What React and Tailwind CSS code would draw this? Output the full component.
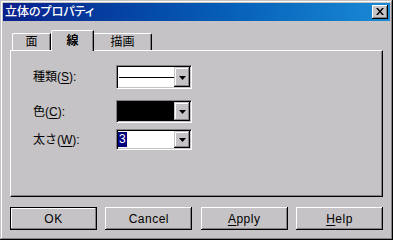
const raised =
  "shadow-[inset_-1px_-1px_#000,inset_1px_1px_#fff,inset_-2px_-2px_#848284]";

const DropButton = () => (
  <div
    className={`w-[16px] h-full flex items-center justify-center bg-[#c6c3c6] shadow-[inset_-1px_-1px_#000,inset_1px_1px_#c6c3c6,inset_-2px_-2px_#848284,inset_2px_2px_#fff]`}
  >
    <svg width="7" height="4" viewBox="0 0 7 4" className="mt-[1px]">
      <path d="M0 0h7L3.5 4z" fill="#000" />
    </svg>
  </div>
);

const Combo = ({ height, children }) => (
  <div
    className={`${height} w-[76px] flex border border-t-[#848284] border-l-[#848284] border-r-white border-b-white p-px bg-white shadow-[inset_1px_1px_#000,inset_-1px_-1px_#c6c3c6]`}
  >
    <div className="flex-1 flex items-center bg-white">{children}</div>
    <DropButton />
  </div>
);

const Label = ({ text, mn }) => (
  <span className="w-[83px] text-[12px] text-black">
    {text}(<span className="underline underline-offset-2">{mn}</span>):
  </span>
);

const Button = ({ children, primary }) => (
  <button
    className={`w-[87px] h-[23px] flex items-center justify-center text-[12px] tracking-[0.5px] text-black bg-[#c6c3c6] ${
      primary ? "border border-black shadow-[inset_-1px_-1px_#848284,inset_1px_1px_#fff]" : raised
    }`}
  >
    {children}
  </button>
);

export default function App() {
  return (
    <div
      className="w-[393px] h-[240px] bg-[#c6c3c6] p-[3px] flex flex-col shadow-[inset_-1px_-1px_#000,inset_1px_1px_#c6c3c6,inset_-2px_-2px_#848284,inset_2px_2px_#fff]"
      style={{ fontFamily: '"Liberation Sans", "Noto Sans CJK JP", sans-serif' }}
    >
      <div className="h-[18px] flex items-center justify-between pl-[2px] pr-[2px] bg-gradient-to-r from-[#0a1f8c] to-[#1a8ad6]">
        <span className="text-white text-[12px] font-medium leading-none [font-feature-settings:'palt']">
          立体のプロパティ
        </span>
        <div className="w-[16px] h-[14px] flex items-center justify-center bg-[#c6c3c6] shadow-[inset_-1px_-1px_#000,inset_1px_1px_#fff,inset_-2px_-2px_#848284]">
          <svg width="8" height="7" viewBox="0 0 8 7" className="mb-px">
            <path d="M0 0h2l2 2.5L6 0h2L5 3.5 8 7H6L4 4.5 2 7H0l3-3.5z" fill="#000" />
          </svg>
        </div>
      </div>

      <div className="px-[7px] mt-[9px] flex flex-col">
        <div className="h-[20px] flex items-end pl-[2px]">
          <div className="w-[39px] h-[17px] flex items-center justify-center text-[12px] border-t border-l border-white border-r border-r-black rounded-tl-[2px] shadow-[inset_-1px_0_#848284]">
            面
          </div>
          <div className="relative z-10 w-[43px] h-[21px] -mb-px bg-[#c6c3c6] flex items-center justify-center text-[12px] font-bold border-t border-l border-white border-r border-r-black rounded-tl-[2px] shadow-[inset_-1px_0_#848284]">
            線
          </div>
          <div className="w-[58px] h-[17px] flex items-center justify-center text-[12px] border-t border-white border-r border-r-black rounded-tr-[2px] shadow-[inset_-1px_0_#848284]">
            描画
          </div>
        </div>

        <div className="h-[147px] border border-t-white border-l-white border-r-black border-b-black shadow-[inset_-1px_-1px_#848284] pt-[14px] pl-[22px] flex flex-col">
          <div className="flex items-center">
            <Label text="種類" mn="S" />
            <Combo height="h-[24px]">
              <div className="w-[55px] h-px bg-black ml-px" />
            </Combo>
          </div>
          <div className="flex items-center mt-[11px]">
            <Label text="色" mn="C" />
            <Combo height="h-[23px]">
              <div className="w-[56px] h-full bg-black" />
            </Combo>
          </div>
          <div className="flex items-center mt-[6px]">
            <Label text="太さ" mn="W" />
            <Combo height="h-[21px]">
              <span className="bg-[#000080] text-white text-[12px] leading-[15px] px-px">3</span>
            </Combo>
          </div>
        </div>
      </div>

      <div className="px-[7px] mt-[10px] flex justify-between">
        <Button primary>OK</Button>
        <Button>Cancel</Button>
        <Button>
          <span className="underline underline-offset-2">A</span>pply
        </Button>
        <Button>
          <span className="underline underline-offset-2">H</span>elp
        </Button>
      </div>
    </div>
  );
}
